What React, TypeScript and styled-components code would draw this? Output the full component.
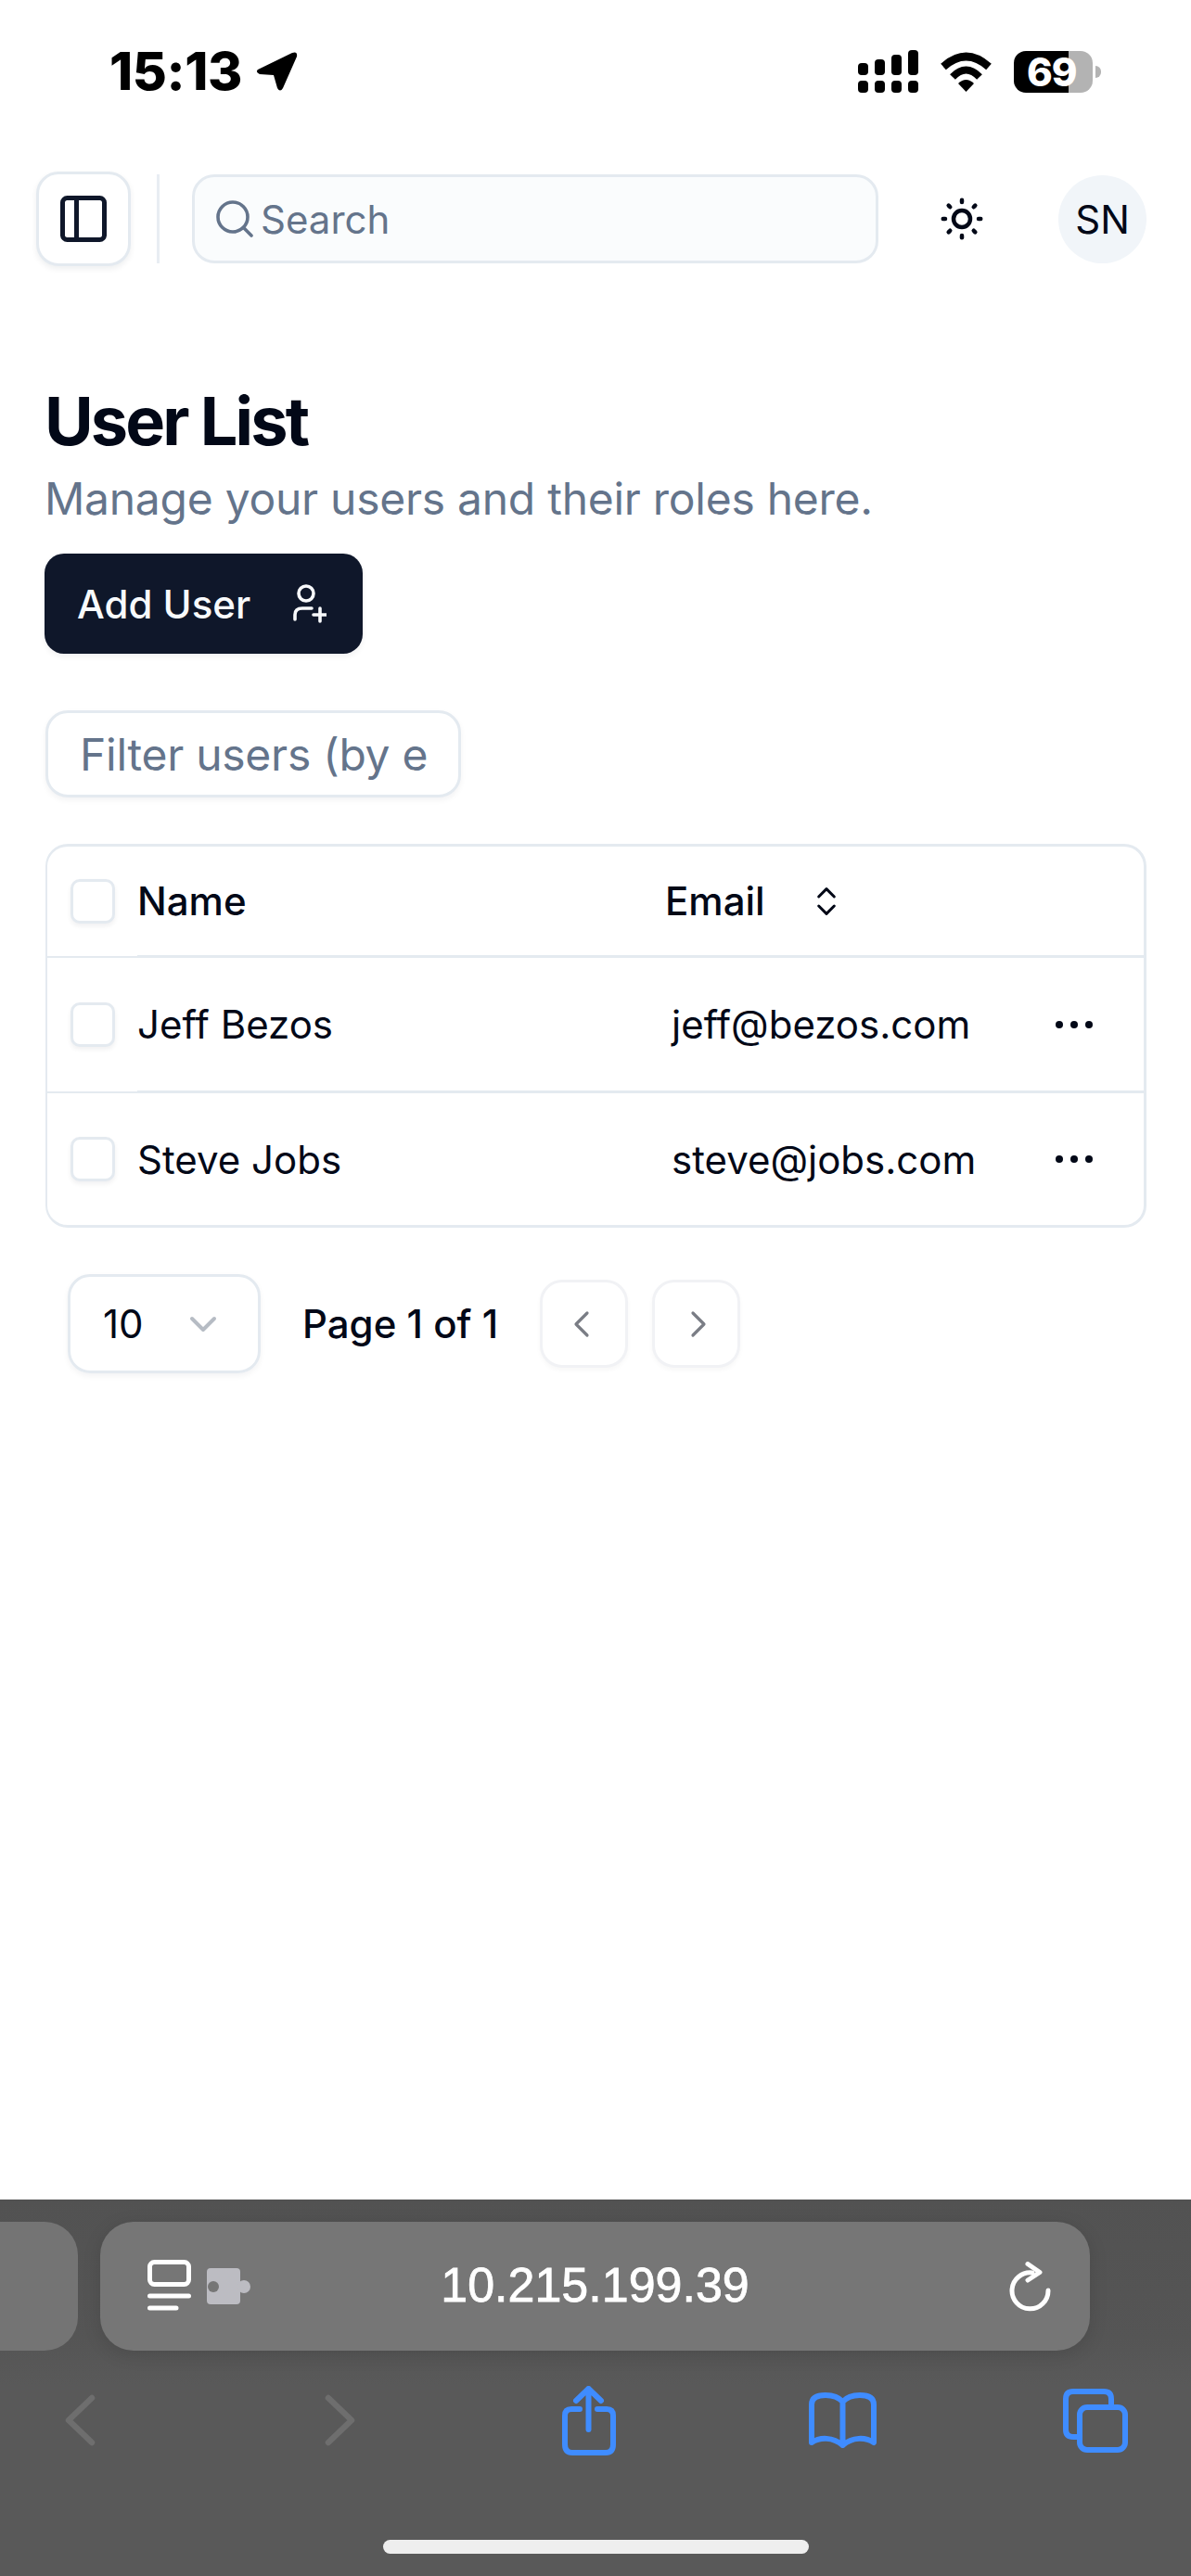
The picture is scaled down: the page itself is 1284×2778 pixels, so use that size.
import React from "react";
import styled, { createGlobalStyle } from "styled-components";
import { ChevronDown, ChevronLeft, ChevronRight, ChevronsUpDown, PanelLeft, Search, SunMedium } from "lucide-react";

const Global = createGlobalStyle`
  html, body { margin: 0; padding: 0; background: #fff; }
  * { box-sizing: border-box; }
`;

const Phone = styled.div`
  width: 1284px;
  height: 2778px;
  display: flex;
  flex-direction: column;
  overflow: hidden;
  background: #fff;
  color: #020817;
  font-family: Inter, "Liberation Sans", sans-serif;
`;

/* status bar */
const StatusBar = styled.div`
  height: 154px;
  flex: none;
  display: flex;
  align-items: center;
  justify-content: space-between;
  padding: 0 106px 0 118px;
  color: #000;
`;
const TimeGroup = styled.div`
  display: flex;
  align-items: center;
  gap: 15px;
`;
const Time = styled.span`
  font-size: 57px;
  font-weight: 800;
  line-height: 60px;
  letter-spacing: -0.4px;
`;
const StatusIcons = styled.div`
  display: flex;
  align-items: center;
`;
const Battery = styled.div`
  position: relative;
  width: 85px;
  height: 45px;
  margin-left: 23px;
  border-radius: 13px;
  background: linear-gradient(90deg, #000 0 59px, #b3b3b3 59px);
  color: #fff;
  font-size: 42px;
  font-weight: 800;
  line-height: 45px;
  padding-left: 14px;
  letter-spacing: -1px;
  &::after {
    content: "";
    position: absolute;
    left: 88px;
    top: 16px;
    width: 6px;
    height: 13px;
    border-radius: 0 6px 6px 0;
    background: #b3b3b3;
  }
`;

/* app top bar */
const TopBar = styled.header`
  flex: none;
  display: flex;
  align-items: center;
  padding: 31px 48px 0 39px;
`;
const ToggleButton = styled.button`
  width: 102px;
  height: 102px;
  flex: none;
  padding: 0;
  display: flex;
  align-items: center;
  justify-content: center;
  background: #fff;
  border: 3px solid #e4eaf0;
  border-radius: 24px;
  box-shadow: 0 3px 6px rgba(15, 23, 42, 0.07);
  color: #0f172a;
`;
const VDivider = styled.div`
  width: 3px;
  height: 96px;
  margin: 0 35px 0 28px;
  background: #e8edf3;
  flex: none;
`;
const SearchBox = styled.div`
  width: 740px;
  height: 96px;
  flex: none;
  display: flex;
  align-items: center;
  gap: 4px;
  padding-left: 19px;
  background: #fafcfd;
  border: 3px solid #e4eaf0;
  border-radius: 24px;
  color: #64748b;
  font-size: 42px;
`;
const SunSlot = styled.div`
  width: 54px;
  height: 54px;
  margin-left: 63px;
  flex: none;
  color: #020817;
`;
const Avatar = styled.div`
  width: 95px;
  height: 95px;
  margin-left: 77px;
  flex: none;
  display: flex;
  align-items: center;
  justify-content: center;
  border-radius: 50%;
  background: #f1f5f9;
  font-size: 42px;
  color: #020817;
`;

/* main */
const Main = styled.main`
  flex: 1;
  display: flex;
  flex-direction: column;
  align-items: flex-start;
  padding: 119px 49px 0 48px;
`;
const Title = styled.h1`
  margin: 0;
  font-size: 72px;
  line-height: 96px;
  font-weight: 700;
  letter-spacing: -2.9px;
  color: #020817;
`;
const Subtitle = styled.p`
  margin: 0;
  font-size: 48px;
  line-height: 72px;
  letter-spacing: -0.27px;
  color: #64748b;
`;
const AddButton = styled.button`
  margin-top: 23px;
  width: 343px;
  height: 108px;
  display: flex;
  align-items: center;
  padding: 0 0 0 35px;
  background: #0f172a;
  color: #f8fafc;
  border: 0;
  border-radius: 21px;
  font: 500 42px Inter, sans-serif;
  box-shadow: 0 3px 6px rgba(15, 23, 42, 0.06);
  svg { margin-left: 46px; }
`;
const FilterBox = styled.div`
  margin: 61px 0 0 1px;
  width: 448px;
  height: 94px;
  padding: 0 33px 0 34px;
  display: flex;
  align-items: center;
  border: 3px solid #e4eaf0;
  border-radius: 24px;
  background: #fff;
  box-shadow: 0 3px 6px rgba(15, 23, 42, 0.05);
  font-size: 48px;
  letter-spacing: -0.27px;
  color: #64748b;
  overflow: hidden;
`;
const Clip = styled.span`
  display: block;
  width: 100%;
  overflow: hidden;
  white-space: nowrap;
`;
const Table = styled.div`
  margin-top: 50px;
  width: 1187px;
  margin-left: 1px;
  border: 3px solid #e4eaf0;
  border-left-width: 2px;
  border-radius: 24px;
  overflow: hidden;
`;
const Row = styled.div<{ $h: number }>`
  display: grid;
  grid-template-columns: 97px 569px 1fr 100px;
  height: ${(p) => p.$h}px;
`;
const Cell = styled.div<{ $border: boolean; $thin?: boolean; $pad?: number; $medium?: boolean }>`
  display: flex;
  align-items: center;
  padding-left: ${(p) => p.$pad ?? 0}px;
  border-bottom: ${(p) => (p.$border ? (p.$thin ? "2px" : "3px") : "0")} solid #e4eaf0;
  font-size: 42px;
  font-weight: ${(p) => (p.$medium ? 500 : 400)};
  color: #020817;
`;
const Check = styled.span`
  display: block;
  width: 48px;
  height: 48px;
  border: 3px solid #e4eaf0;
  border-radius: 10px;
  background: #fff;
  box-shadow: 0 3px 5px rgba(15, 23, 42, 0.06);
`;
const SortSlot = styled.span`
  display: flex;
  margin-left: 46px;
`;
const Pager = styled.div`
  margin: 50px 0 0 25px;
  display: flex;
  align-items: center;
`;
const PageSelect = styled.div`
  width: 208px;
  height: 107px;
  display: flex;
  align-items: center;
  justify-content: space-between;
  padding: 0 35px 0 35px;
  border: 3px solid #e4eaf0;
  border-radius: 24px;
  box-shadow: 0 3px 6px rgba(15, 23, 42, 0.05);
  font-size: 42px;
  color: #020817;
  svg { color: #b6bcc4; }
`;
const PageLabel = styled.span`
  margin: 0 45px 0 45px;
  font-size: 42px;
  font-weight: 500;
  color: #020817;
`;
const PageButton = styled.button<{ $gap?: number; $side: "left" | "right" }>`
  width: 95px;
  height: 95px;
  margin-left: ${(p) => p.$gap ?? 0}px;
  padding: ${(p) => (p.$side === "left" ? "0 6px 0 0" : "0 0 0 5px")};
  display: flex;
  align-items: center;
  justify-content: center;
  background: #fff;
  border: 3px solid #f1f2f5;
  border-radius: 24px;
  box-shadow: 0 3px 5px rgba(15, 23, 42, 0.03);
  color: #7a7d85;
`;

/* safari chrome */
const Safari = styled.footer`
  flex: none;
  height: 406px;
  background: linear-gradient(180deg, #525252 0, #555 150px, #595959 200px);
  padding-top: 24px;
  display: flex;
  flex-direction: column;
`;
const TabRow = styled.div`
  display: flex;
  gap: 24px;
  height: 139px;
  flex: none;
`;
const SideTab = styled.div`
  width: 84px;
  background: #747474;
  border-radius: 0 36px 36px 0;
`;
const Address = styled.div`
  width: 1067px;
  display: grid;
  grid-template-columns: 1fr auto 1fr;
  align-items: center;
  background: #767676;
  border-radius: 36px;
  box-shadow: 0 4px 20px rgba(0, 0, 0, 0.12);
  color: #fff;
  font: 400 52px "Liberation Sans", Arial, sans-serif;
  -webkit-text-stroke: 0.8px #fff;
`;
const AddressText = styled.span`
  padding-bottom: 3px;
`;
const AddressLeft = styled.div`
  display: flex;
  align-items: center;
  gap: 17px;
  padding-left: 51px;
`;
const AddressRight = styled.div`
  display: flex;
  justify-content: flex-end;
  padding-right: 42px;
`;
const Toolbar = styled.div`
  flex: none;
  height: 150px;
  display: grid;
  grid-template-columns: 172px 388px 150px 396px 150px;
  align-items: center;
  justify-items: center;
`;
const HomeBar = styled.div`
  flex: none;
  width: 459px;
  height: 15px;
  margin: 54px auto 0 413px;
  border-radius: 8px;
  background: #eee;
`;

const blue = "#3f8cff";

const users = [
  { name: "Jeff Bezos", email: "jeff@bezos.com" },
  { name: "Steve Jobs", email: "steve@jobs.com" },
];

const Dots = () => (
  <svg width="40" height="10" viewBox="0 0 40 10" fill="#020817">
    <circle cx="4" cy="5" r="4" />
    <circle cx="20" cy="5" r="4" />
    <circle cx="36" cy="5" r="4" />
  </svg>
);

export default function App() {
  return (
    <Phone>
      <Global />
      <StatusBar>
        <TimeGroup>
          <Time>15:13</Time>
          <svg width="46" height="44" viewBox="0 0 46 44" fill="#000">
            <path d="M2 20 L39 2 Q45 0 44 6 L29 40 Q26 45 23 40 L19 26 L4 25 Q-1 23 2 20 Z" />
          </svg>
        </TimeGroup>
        <StatusIcons>
          <svg width="65" height="46" viewBox="0 0 65 46" fill="#000">
            <rect x="0" y="14" width="11" height="13" rx="4" />
            <rect x="18" y="10" width="11" height="17" rx="4" />
            <rect x="36" y="5" width="11" height="22" rx="4" />
            <rect x="54" y="0" width="11" height="27" rx="4" />
            <rect x="0" y="33" width="11" height="13" rx="4" />
            <rect x="18" y="33" width="11" height="13" rx="4" />
            <rect x="36" y="33" width="11" height="13" rx="4" />
            <rect x="54" y="33" width="11" height="13" rx="4" />
          </svg>
          <svg width="57" height="43" viewBox="0 0 57 43" style={{ marginLeft: 23 }}>
            <path d="M4 16 Q28.5 -6 53 16" fill="none" stroke="#000" strokeWidth="8.5" />
            <path d="M14 27 Q28.5 12 43 27" fill="none" stroke="#000" strokeWidth="8" />
            <path d="M20 34 Q28.5 26 37 34 L28.5 43 Z" fill="#000" />
          </svg>
          <Battery>69</Battery>
        </StatusIcons>
      </StatusBar>

      <TopBar>
        <ToggleButton>
          <PanelLeft size={60} strokeWidth={2} />
        </ToggleButton>
        <VDivider />
        <SearchBox>
          <Search size={48} strokeWidth={1.8} />
          Search
        </SearchBox>
        <SunSlot>
          <SunMedium size={54} strokeWidth={2} />
        </SunSlot>
        <Avatar>SN</Avatar>
      </TopBar>

      <Main>
        <Title>User List</Title>
        <Subtitle>Manage your users and their roles here.</Subtitle>
        <AddButton>
          Add User
          <svg width="36" height="42" viewBox="0 0 36 42" fill="none" stroke="#f8fafc" strokeWidth="3.6" strokeLinecap="round">
            <circle cx="14" cy="10" r="8" />
            <path d="M2 38 V33 Q2 26 10 26 H20" />
            <path d="M29 26 V40 M22 33 H36" />
          </svg>
        </AddButton>
        <FilterBox>
          <Clip>Filter users (by email)...</Clip>
        </FilterBox>

        <Table>
          <Row $h={120}>
            <Cell $border $thin $pad={25}>
              <Check />
            </Cell>
            <Cell $border $medium>Name</Cell>
            <Cell $border $medium>
              Email
              <SortSlot>
                <ChevronsUpDown size={40} strokeWidth={1.8} />
              </SortSlot>
            </Cell>
            <Cell $border />
          </Row>
          {users.map((u, i) => (
            <Row key={u.email} $h={i === 0 ? 146 : 142}>
              <Cell $border={i === 0} $thin $pad={25}>
                <Check />
              </Cell>
              <Cell $border={i === 0}>{u.name}</Cell>
              <Cell $border={i === 0} $pad={7}>{u.email}</Cell>
              <Cell $border={i === 0} $pad={5}>
                <Dots />
              </Cell>
            </Row>
          ))}
        </Table>

        <Pager>
          <PageSelect>
            10
            <ChevronDown size={48} strokeWidth={2} />
          </PageSelect>
          <PageLabel>Page 1 of 1</PageLabel>
          <PageButton $side="left">
            <ChevronLeft size={48} strokeWidth={1.6} />
          </PageButton>
          <PageButton $side="right" $gap={26}>
            <ChevronRight size={48} strokeWidth={1.6} />
          </PageButton>
        </Pager>
      </Main>

      <Safari>
        <TabRow>
          <SideTab />
          <Address>
            <AddressLeft>
              <svg width="47" height="57" viewBox="0 0 47 57" fill="none" stroke="#fff" strokeWidth="5" strokeLinecap="round">
                <rect x="2.5" y="2.5" width="42" height="24" rx="5" />
                <path d="M2.5 39 H44.5 M2.5 52 H31" />
              </svg>
              <svg width="47" height="39" viewBox="0 0 47 39">
                <rect x="0" y="0" width="36" height="39" rx="4" fill="#bcbcc2" />
                <circle cx="40" cy="20" r="7" fill="#bcbcc2" />
                <circle cx="7" cy="20" r="6" fill="#767676" />
              </svg>
            </AddressLeft>
            <AddressText>10.215.199.39</AddressText>
            <AddressRight>
              <svg width="45" height="54" viewBox="0 0 45 54" fill="none" stroke="#fff" strokeWidth="5" strokeLinecap="round" strokeLinejoin="round">
                <path d="M25 12 A19.5 19.5 0 1 0 42 31" />
                <path d="M20 2.5 L33 11.5 L20 20" />
              </svg>
            </AddressRight>
          </Address>
        </TabRow>
        <Toolbar>
          <svg width="33" height="56" viewBox="0 0 33 56" fill="none" stroke="#6e6e6e" strokeWidth="6.5" strokeLinecap="round" strokeLinejoin="round">
            <path d="M29 4 L4 28 L29 52" />
          </svg>
          <svg width="33" height="56" viewBox="0 0 33 56" fill="none" stroke="#6e6e6e" strokeWidth="6.5" strokeLinecap="round" strokeLinejoin="round">
            <path d="M4 4 L29 28 L4 52" />
          </svg>
          <svg width="58" height="75" viewBox="0 0 58 75" fill="none" stroke={blue} strokeWidth="6" strokeLinecap="round" strokeLinejoin="round">
            <path d="M19 25 H10 Q3 25 3 32 V63 Q3 72 11 72 H47 Q55 72 55 63 V32 Q55 25 48 25 H38" />
            <path d="M28.5 47 V3 M15 16 L28.5 3 L42 16" />
          </svg>
          <svg width="73" height="60" viewBox="0 0 73 60" fill="none" stroke={blue} strokeWidth="6" strokeLinecap="round" strokeLinejoin="round">
            <path d="M36.5 10 C32 5 26 3 18 3 C10 3 3 5 3 13 V54 C12 48 26 48 36.5 57 C47 48 61 48 70 54 V13 C70 5 63 3 55 3 C47 3 41 5 36.5 10 Z M36.5 10 V57" />
          </svg>
          <svg width="70" height="69" viewBox="0 0 70 69" fill="none" stroke={blue} strokeWidth="6" strokeLinecap="round" strokeLinejoin="round">
            <rect x="18" y="20" width="49" height="46" rx="8" />
            <path d="M52 18 V11 Q52 3 44 3 H11 Q3 3 3 11 V44 Q3 52 11 52 H16" />
          </svg>
        </Toolbar>
        <HomeBar />
      </Safari>
    </Phone>
  );
}
